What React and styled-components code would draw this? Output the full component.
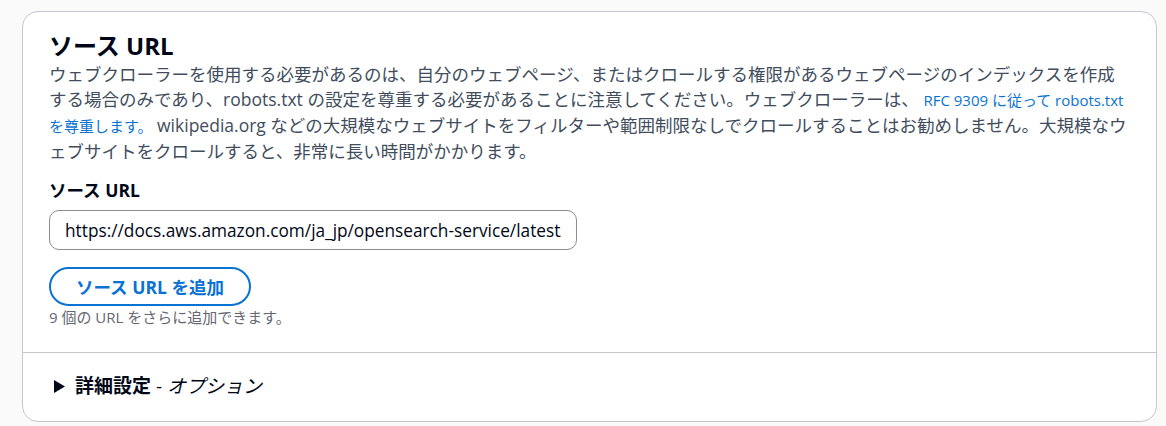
import React from 'react';
import styled, { createGlobalStyle } from 'styled-components';

const GlobalStyle = createGlobalStyle`
    body {
        margin: 0;
        background: #fafafa;
        font-family: 'Open Sans', 'Noto Sans CJK JP', sans-serif;
        color: #000716;
    }
`;

const Page = styled.div`
    padding: 11px 9px 6px 22px;
`;

const Card = styled.section`
    background: #ffffff;
    border: 1px solid #c6c6cd;
    border-radius: 16px;
`;

const Body = styled.div`
    padding: 19px 27px 25px 26px;
`;

const Title = styled.h2`
    margin: 0;
    font-size: 24px;
    line-height: 30px;
    font-weight: 700;
    color: #000716;
`;

const Description = styled.p`
    margin: 1px 0 0;
    font-size: 17.5px;
    line-height: 25px;
    color: #414d5c;
`;

const Link = styled.a`
    color: #0972d3;
    font-size: 15px;
    text-decoration: none;
`;

const Field = styled.div`
    display: flex;
    flex-direction: column;
    align-items: flex-start;
    margin-top: 14px;
`;

const Label = styled.label`
    font-size: 17.5px;
    line-height: 25px;
    font-weight: 700;
    color: #000716;
`;

const Input = styled.input`
    box-sizing: border-box;
    margin-top: 7px;
    width: 528px;
    height: 40px;
    padding: 0 15px;
    border: 1px solid #8c8c94;
    border-radius: 10px;
    font-family: inherit;
    font-size: 17.25px;
    color: #000716;
    background: #ffffff;
    outline: none;
`;

const AddButton = styled.button`
    box-sizing: border-box;
    margin-top: 17px;
    height: 39px;
    padding: 0 25px;
    border: 2px solid #0972d3;
    border-radius: 20px;
    background: #ffffff;
    color: #0972d3;
    font-family: inherit;
    font-size: 17.5px;
    font-weight: 700;
    cursor: pointer;
`;

const Hint = styled.div`
    margin-top: 1px;
    font-size: 15px;
    line-height: 20px;
    color: #656871;
`;

const Footer = styled.div`
    display: flex;
    align-items: center;
    gap: 10px;
    padding: 20px 27px 22px 31px;
    border-top: 1px solid #c6c6cd;
    font-size: 19px;
    line-height: 26px;
    color: #000716;
`;

const Strong = styled.span`
    font-weight: 700;
`;

const Muted = styled.span`
    font-style: italic;
`;

const Caret = () => (
    <svg width="11" height="13" viewBox="0 0 11 13" aria-hidden="true">
        <polygon points="0,0 11,6.5 0,13" fill="#000716" />
    </svg>
);

export default function App() {
    return (
        <Page>
            <GlobalStyle />
            <Card>
                <Body>
                    <Title>ソース URL</Title>
                    <Description>
                        ウェブクローラーを使用する必要があるのは、自分のウェブページ、またはクロールする権限があるウェブページのインデックスを作成する場合のみであり、robots.txt
                        の設定を尊重する必要があることに注意してください。ウェブクローラーは、{' '}
                        <Link href="#">RFC 9309 に従って robots.txt を尊重します。</Link>{' '}
                        wikipedia.org
                        などの大規模なウェブサイトをフィルターや範囲制限なしでクロールすることはお勧めしません。大規模なウェブサイトをクロールすると、非常に長い時間がかかります。
                    </Description>
                    <Field>
                        <Label>ソース URL</Label>
                        <Input
                            readOnly
                            value="https://docs.aws.amazon.com/ja_jp/opensearch-service/latest/developerguide/"
                        />
                        <AddButton>ソース URL を追加</AddButton>
                        <Hint>9 個の URL をさらに追加できます。</Hint>
                    </Field>
                </Body>
                <Footer>
                    <Caret />
                    <span>
                        <Strong>詳細設定</Strong> - <Muted>オプション</Muted>
                    </span>
                </Footer>
            </Card>
        </Page>
    );
}
